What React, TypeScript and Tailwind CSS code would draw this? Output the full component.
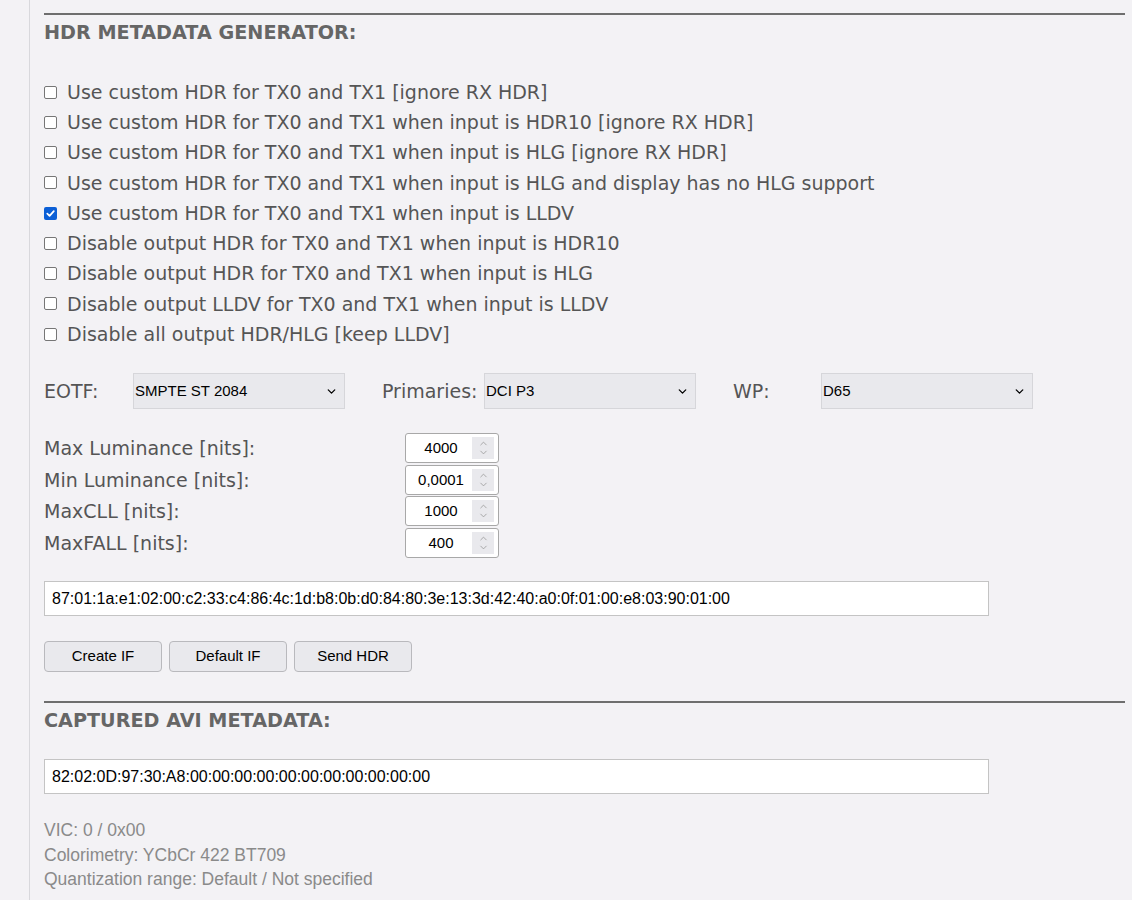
import { ChevronDown, ChevronUp } from "lucide-react";

const options = [
  { label: "Use custom HDR for TX0 and TX1 [ignore RX HDR]", checked: false },
  { label: "Use custom HDR for TX0 and TX1 when input is HDR10 [ignore RX HDR]", checked: false },
  { label: "Use custom HDR for TX0 and TX1 when input is HLG [ignore RX HDR]", checked: false },
  { label: "Use custom HDR for TX0 and TX1 when input is HLG and display has no HLG support", checked: false },
  { label: "Use custom HDR for TX0 and TX1 when input is LLDV", checked: true },
  { label: "Disable output HDR for TX0 and TX1 when input is HDR10", checked: false },
  { label: "Disable output HDR for TX0 and TX1 when input is HLG", checked: false },
  { label: "Disable output LLDV for TX0 and TX1 when input is LLDV", checked: false },
  { label: "Disable all output HDR/HLG [keep LLDV]", checked: false },
];

const numbers = [
  { label: "Max Luminance [nits]:", value: "4000" },
  { label: "Min Luminance [nits]:", value: "0,0001" },
  { label: "MaxCLL [nits]:", value: "1000" },
  { label: "MaxFALL [nits]:", value: "400" },
];

const verdana = "font-['DejaVu_Sans',Verdana,sans-serif]";
const tahoma = "font-['Liberation_Sans',Tahoma,Arial,sans-serif]";

function Checkbox({ checked }: { checked: boolean }) {
  if (checked) {
    return (
      <span className="flex h-[13px] w-[13px] shrink-0 items-center justify-center rounded-[2px] bg-[#0b5fd6]">
        <svg viewBox="0 0 12 12" className="h-[11px] w-[11px]">
          <path d="M2.5 6.2 L5 8.6 L9.6 3.4" fill="none" stroke="white" strokeWidth="1.9" strokeLinecap="round" strokeLinejoin="round" />
        </svg>
      </span>
    );
  }
  return <span className="h-[13px] w-[13px] shrink-0 rounded-[2px] border border-[#767676] bg-white" />;
}

function Select({ value }: { value: string }) {
  return (
    <div className={`flex h-[36px] w-[212px] items-center justify-between border border-[#d6d6da] bg-[#e9e9ed] pl-[1px] pr-[6px] ${tahoma} text-[15px] text-black`}>
      <span>{value}</span>
      <ChevronDown className="h-[13px] w-[13px] text-black" strokeWidth={2.4} />
    </div>
  );
}

function NumberBox({ value }: { value: string }) {
  return (
    <div className="flex h-[30px] w-[94px] items-center rounded-[3px] border border-[#a8a8a8] bg-white pr-[4px]">
      <span className={`flex-1 pl-[4px] text-center ${tahoma} text-[15px] text-black`}>{value}</span>
      <span className="flex h-[22px] w-[22px] flex-col items-center justify-center bg-[#e9e9ed] text-[#9a9a9a]">
        <ChevronUp className="-mb-[2px] h-[11px] w-[11px]" strokeWidth={1.8} />
        <ChevronDown className="h-[11px] w-[11px]" strokeWidth={1.8} />
      </span>
    </div>
  );
}

function Button({ label }: { label: string }) {
  return (
    <div className={`flex h-[31px] w-[118px] items-center justify-center rounded-[4px] border border-[#b9b9bd] bg-[#e9e9ed] ${tahoma} text-[15px] text-black`}>
      {label}
    </div>
  );
}

function TextField({ value }: { value: string }) {
  return (
    <div className={`flex h-[35px] w-[945px] items-center border border-[#c4c4c4] bg-white px-[7px] ${tahoma} text-[16px] text-black`}>
      {value}
    </div>
  );
}

export default function App() {
  return (
    <div className="flex min-h-[900px] w-[1132px] bg-[#f3f2f5]">
      <div className="w-[30px] shrink-0 border-r border-[#d8d8dc]" />
      <div className="w-[1095px] pl-[14px] pt-[13px]">
        <div className="h-[2px] bg-[#6e6e6e]" />
        <h2 className={`mt-[6px] ${verdana} text-[19.2px] font-bold leading-[24px] text-[#666]`}>HDR METADATA GENERATOR:</h2>

        <div className={`mt-[32px] flex flex-col ${verdana} text-[19px] text-[#555]`}>
          {options.map((o) => (
            <div key={o.label} className="flex h-[30.25px] items-center gap-[10px]">
              <Checkbox checked={o.checked} />
              <span>{o.label}</span>
            </div>
          ))}
        </div>

        <div className={`mt-[24px] flex items-center ${verdana} text-[19px] text-[#555]`}>
          <span className="w-[89px]">EOTF:</span>
          <Select value="SMPTE ST 2084" />
          <span className="ml-[37px] w-[102px]">Primaries:</span>
          <Select value="DCI P3" />
          <span className="ml-[37px] w-[88px]">WP:</span>
          <Select value="D65" />
        </div>

        <div className={`mt-[24px] flex flex-col gap-[1.6px] ${verdana} text-[19px] text-[#555]`}>
          {numbers.map((n) => (
            <div key={n.label} className="flex items-center">
              <span className="w-[361px]">{n.label}</span>
              <NumberBox value={n.value} />
            </div>
          ))}
        </div>

        <div className="mt-[23px]">
          <TextField value="87:01:1a:e1:02:00:c2:33:c4:86:4c:1d:b8:0b:d0:84:80:3e:13:3d:42:40:a0:0f:01:00:e8:03:90:01:00" />
        </div>

        <div className="mt-[25px] flex gap-[7px]">
          <Button label="Create IF" />
          <Button label="Default IF" />
          <Button label="Send HDR" />
        </div>

        <div className="mt-[29px] h-[2px] bg-[#6e6e6e]" />
        <h2 className={`mt-[6px] ${verdana} text-[19.2px] font-bold leading-[24px] text-[#666]`}>CAPTURED AVI METADATA:</h2>

        <div className="mt-[26px]">
          <TextField value="82:02:0D:97:30:A8:00:00:00:00:00:00:00:00:00:00:00" />
        </div>

        <div className={`mt-[24px] flex flex-col ${tahoma} text-[17.5px] leading-[24.5px] text-[#8a8a8a]`}>
          <span>VIC: 0 / 0x00</span>
          <span>Colorimetry: YCbCr 422 BT709</span>
          <span>Quantization range: Default / Not specified</span>
        </div>
      </div>
    </div>
  );
}
